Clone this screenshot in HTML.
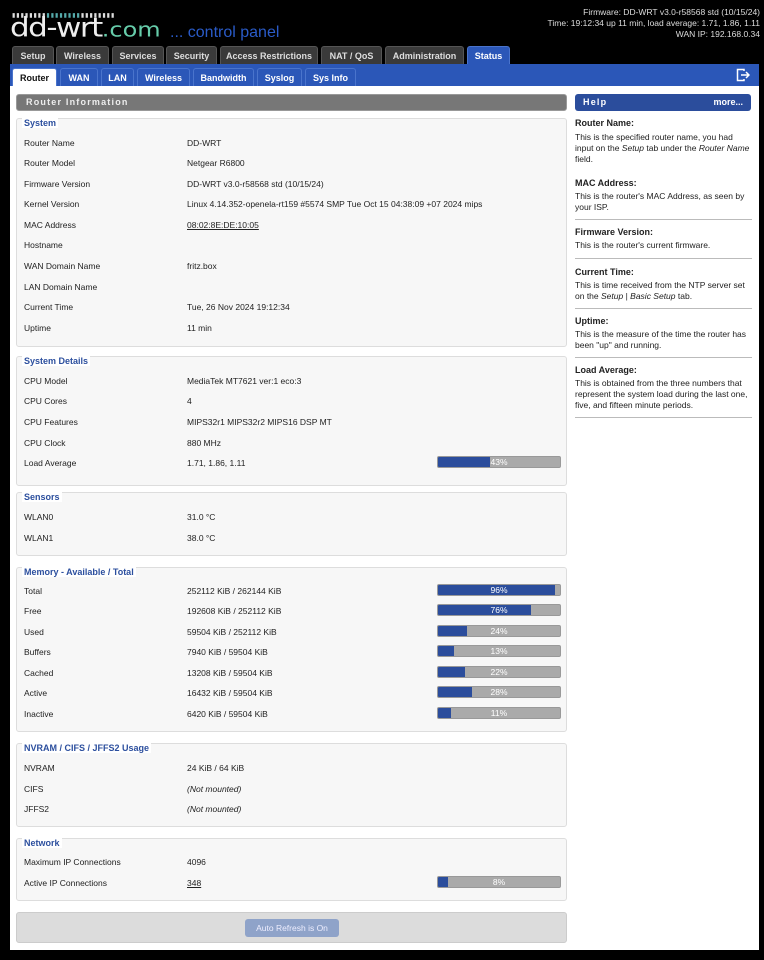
<!DOCTYPE html>
<html><head><meta charset="utf-8"><style>
*{margin:0;padding:0;box-sizing:border-box}
body{width:764px;height:960px;background:#000;font-family:"Liberation Sans",sans-serif;font-size:8.5px;color:#222;position:relative;overflow:hidden}
.a{position:absolute;white-space:nowrap}
.tab{position:absolute;top:46px;height:19px;background:#3a3a3a;color:#ddd;font-weight:bold;font-size:9px;line-height:19px;text-align:center;border-radius:3px 3px 0 0;border:1px solid #555;border-bottom:none}
.st{position:absolute;top:68px;height:18px;background:#2b57b8;color:#fff;font-weight:bold;font-size:9px;line-height:18px;text-align:center;border-radius:3px 3px 0 0;border:1px solid #4a74cc;border-bottom:none}
.fs{position:absolute;left:16px;width:551px;background:#f7f7f7;border:1px solid #ddd;border-radius:3px}
.lg{position:absolute;left:22px;background:#fff;color:#2c4f9e;font-weight:bold;font-size:9px;padding:0 2px;line-height:10px}
.r{position:absolute;line-height:12px;white-space:nowrap}
.bar{position:absolute;left:437px;width:124px;height:12px;background:#aaa;border:1px solid #999;border-radius:2px;overflow:hidden}
.bar i{position:absolute;left:0;top:0;bottom:0;background:#2b4d9c}
.bar b{position:absolute;left:0;right:0;text-align:center;color:#fff;font-weight:normal;line-height:10px;font-size:8.5px}
.hh{position:absolute;left:575px;font-weight:bold;font-size:9px}
.ht{position:absolute;left:575px;width:176px;line-height:11px;font-size:8.5px}
.hr{position:absolute;left:575px;width:177px;height:1px;background:#bbb}
</style></head><body>
<div class="a" style="left:12px;top:12px;font-size:6px;letter-spacing:1px;color:#ddd">▮▮▮▮▮▮▮▮<span style="color:#5aa">▮▮▮▮▮▮▮▮</span>▮▮▮▮▮▮▮▮</div>
<div class="a" style="left:10px;top:15px;font-size:31px;color:#eee;letter-spacing:-1.5px;font-family:'DejaVu Sans',sans-serif;line-height:30px;transform:scaleY(0.85);transform-origin:left top">dd-wrt<span style="color:#6ca;font-size:24px;letter-spacing:0">.com</span></div>
<div class="a" style="left:170px;top:24px;font-size:16px;color:#2a5bc8;line-height:18px">... control panel</div>
<div class="a" style="right:4px;top:7px;text-align:right;color:#ddd;font-size:8.5px;line-height:11px">Firmware: DD-WRT v3.0-r58568 std (10/15/24)<br>Time: 19:12:34 up 11 min, load average: 1.71, 1.86, 1.11<br>WAN IP: 192.168.0.34</div>
<div class="tab" style="left:12px;width:42px">Setup</div>
<div class="tab" style="left:56px;width:53px">Wireless</div>
<div class="tab" style="left:112px;width:52px">Services</div>
<div class="tab" style="left:166px;width:51px">Security</div>
<div class="tab" style="left:220px;width:98px">Access Restrictions</div>
<div class="tab" style="left:321px;width:61px">NAT / QoS</div>
<div class="tab" style="left:385px;width:79px">Administration</div>
<div class="tab" style="left:467px;width:43px;background:#2b57b8;border-color:#4a74cc;color:#fff">Status</div>
<div class="a" style="left:10px;top:64px;width:749px;height:23px;background:#2b57b8"></div>
<div class="st" style="left:12px;width:45px;background:#fff;color:#111;height:19px">Router</div>
<div class="st" style="left:60px;width:38px">WAN</div>
<div class="st" style="left:101px;width:33px">LAN</div>
<div class="st" style="left:137px;width:53px">Wireless</div>
<div class="st" style="left:193px;width:61px">Bandwidth</div>
<div class="st" style="left:257px;width:45px">Syslog</div>
<div class="st" style="left:305px;width:51px">Sys Info</div>
<svg class="a" style="left:736px;top:68px" width="14" height="14" viewBox="0 0 14 14" fill="none" stroke="#fff" stroke-width="1.5"><path d="M8 3V1.5H1.5v11H8V11"/><path d="M5 7h8M10 4l3 3-3 3"/></svg>
<div class="a" style="left:10px;top:86px;width:749px;height:864px;background:#fff"></div>
<div class="a" style="left:16px;top:94px;width:551px;height:17px;background:#777;border:1px solid #999;border-radius:3px;color:#eee;font-weight:bold;font-size:9px;letter-spacing:1.2px;line-height:15px;padding-left:9px">Router Information</div>
<div class="a" style="left:575px;top:94px;width:176px;height:17px;background:#2b4d9c;border-radius:3px;color:#fff;font-weight:bold;font-size:9px;line-height:17px;padding:0 8px"><span style="letter-spacing:1.2px">Help</span><span style="float:right">more...</span></div>

<div class="fs" style="top:118px;height:229px"></div><div class="lg" style="top:118px">System</div>
<div class="fs" style="top:356px;height:130px"></div><div class="lg" style="top:356px">System Details</div>
<div class="fs" style="top:492px;height:64px"></div><div class="lg" style="top:492px">Sensors</div>
<div class="fs" style="top:567px;height:165px"></div><div class="lg" style="top:567px">Memory - Available / Total</div>
<div class="fs" style="top:743px;height:84px"></div><div class="lg" style="top:743px">NVRAM / CIFS / JFFS2 Usage</div>
<div class="fs" style="top:838px;height:63px"></div><div class="lg" style="top:838px">Network</div>

<div class="r" style="left:24px;top:137px">Router Name</div><div class="r" style="left:187px;top:137px">DD-WRT</div>
<div class="r" style="left:24px;top:157px">Router Model</div><div class="r" style="left:187px;top:157px">Netgear R6800</div>
<div class="r" style="left:24px;top:178px">Firmware Version</div><div class="r" style="left:187px;top:178px">DD-WRT v3.0-r58568 std (10/15/24)</div>
<div class="r" style="left:24px;top:198px">Kernel Version</div><div class="r" style="left:187px;top:198px">Linux 4.14.352-openela-rt159 #5574 SMP Tue Oct 15 04:38:09 +07 2024 mips</div>
<div class="r" style="left:24px;top:219px">MAC Address</div><div class="r" style="left:187px;top:219px;text-decoration:underline">08:02:8E:DE:10:05</div>
<div class="r" style="left:24px;top:239px">Hostname</div>
<div class="r" style="left:24px;top:260px">WAN Domain Name</div><div class="r" style="left:187px;top:260px">fritz.box</div>
<div class="r" style="left:24px;top:281px">LAN Domain Name</div>
<div class="r" style="left:24px;top:301px">Current Time</div><div class="r" style="left:187px;top:301px">Tue, 26 Nov 2024 19:12:34</div>
<div class="r" style="left:24px;top:322px">Uptime</div><div class="r" style="left:187px;top:322px">11 min</div>

<div class="r" style="left:24px;top:375px">CPU Model</div><div class="r" style="left:187px;top:375px">MediaTek MT7621 ver:1 eco:3</div>
<div class="r" style="left:24px;top:395px">CPU Cores</div><div class="r" style="left:187px;top:395px">4</div>
<div class="r" style="left:24px;top:416px">CPU Features</div><div class="r" style="left:187px;top:416px">MIPS32r1 MIPS32r2 MIPS16 DSP MT</div>
<div class="r" style="left:24px;top:437px">CPU Clock</div><div class="r" style="left:187px;top:437px">880 MHz</div>
<div class="r" style="left:24px;top:457px">Load Average</div><div class="r" style="left:187px;top:457px">1.71, 1.86, 1.11</div>
<div class="bar" style="top:456px"><i style="width:43%"></i><b>43%</b></div>

<div class="r" style="left:24px;top:511px">WLAN0</div><div class="r" style="left:187px;top:511px">31.0 °C</div>
<div class="r" style="left:24px;top:532px">WLAN1</div><div class="r" style="left:187px;top:532px">38.0 °C</div>

<div class="r" style="left:24px;top:585px">Total</div><div class="r" style="left:187px;top:585px">252112 KiB / 262144 KiB</div><div class="bar" style="top:584px"><i style="width:96%"></i><b>96%</b></div>
<div class="r" style="left:24px;top:605px">Free</div><div class="r" style="left:187px;top:605px">192608 KiB / 252112 KiB</div><div class="bar" style="top:604px"><i style="width:76%"></i><b>76%</b></div>
<div class="r" style="left:24px;top:626px">Used</div><div class="r" style="left:187px;top:626px">59504 KiB / 252112 KiB</div><div class="bar" style="top:625px"><i style="width:24%"></i><b>24%</b></div>
<div class="r" style="left:24px;top:646px">Buffers</div><div class="r" style="left:187px;top:646px">7940 KiB / 59504 KiB</div><div class="bar" style="top:645px"><i style="width:13%"></i><b>13%</b></div>
<div class="r" style="left:24px;top:667px">Cached</div><div class="r" style="left:187px;top:667px">13208 KiB / 59504 KiB</div><div class="bar" style="top:666px"><i style="width:22%"></i><b>22%</b></div>
<div class="r" style="left:24px;top:687px">Active</div><div class="r" style="left:187px;top:687px">16432 KiB / 59504 KiB</div><div class="bar" style="top:686px"><i style="width:28%"></i><b>28%</b></div>
<div class="r" style="left:24px;top:708px">Inactive</div><div class="r" style="left:187px;top:708px">6420 KiB / 59504 KiB</div><div class="bar" style="top:707px"><i style="width:11%"></i><b>11%</b></div>

<div class="r" style="left:24px;top:762px">NVRAM</div><div class="r" style="left:187px;top:762px">24 KiB / 64 KiB</div>
<div class="r" style="left:24px;top:783px">CIFS</div><div class="r" style="left:187px;top:783px;font-style:italic">(Not mounted)</div>
<div class="r" style="left:24px;top:803px">JFFS2</div><div class="r" style="left:187px;top:803px;font-style:italic">(Not mounted)</div>

<div class="r" style="left:24px;top:856px">Maximum IP Connections</div><div class="r" style="left:187px;top:856px">4096</div>
<div class="r" style="left:24px;top:877px">Active IP Connections</div><div class="r" style="left:187px;top:877px;text-decoration:underline">348</div>
<div class="bar" style="top:876px"><i style="width:8%"></i><b>8%</b></div>

<div class="a" style="left:16px;top:912px;width:551px;height:31px;background:#dcdcdc;border:1px solid #ccc;border-radius:3px"></div>
<div class="a" style="left:245px;top:919px;width:94px;height:18px;background:#8fa3c9;border-radius:3px;color:#eef;text-align:center;line-height:18px">Auto Refresh is On</div>

<div class="hh" style="top:118px">Router Name:</div>
<div class="ht" style="top:132px">This is the specified router name, you had input on the <i>Setup</i> tab under the <i>Router Name</i> field.</div>
<div class="hr" style="top:219px"></div>
<div class="hh" style="top:178px">MAC Address:</div>
<div class="ht" style="top:191px">This is the router's MAC Address, as seen by your ISP.</div>
<div class="hr" style="top:258px"></div>
<div class="hh" style="top:227px">Firmware Version:</div>
<div class="ht" style="top:240px">This is the router's current firmware.</div>
<div class="hh" style="top:267px">Current Time:</div>
<div class="ht" style="top:280px">This is time received from the NTP server set on the <i>Setup</i> | <i>Basic Setup</i> tab.</div>
<div class="hr" style="top:308px"></div>
<div class="hh" style="top:316px">Uptime:</div>
<div class="ht" style="top:329px">This is the measure of the time the router has been "up" and running.</div>
<div class="hr" style="top:357px"></div>
<div class="hh" style="top:365px">Load Average:</div>
<div class="ht" style="top:378px">This is obtained from the three numbers that represent the system load during the last one, five, and fifteen minute periods.</div>
<div class="hr" style="top:417px"></div>
</body></html>
